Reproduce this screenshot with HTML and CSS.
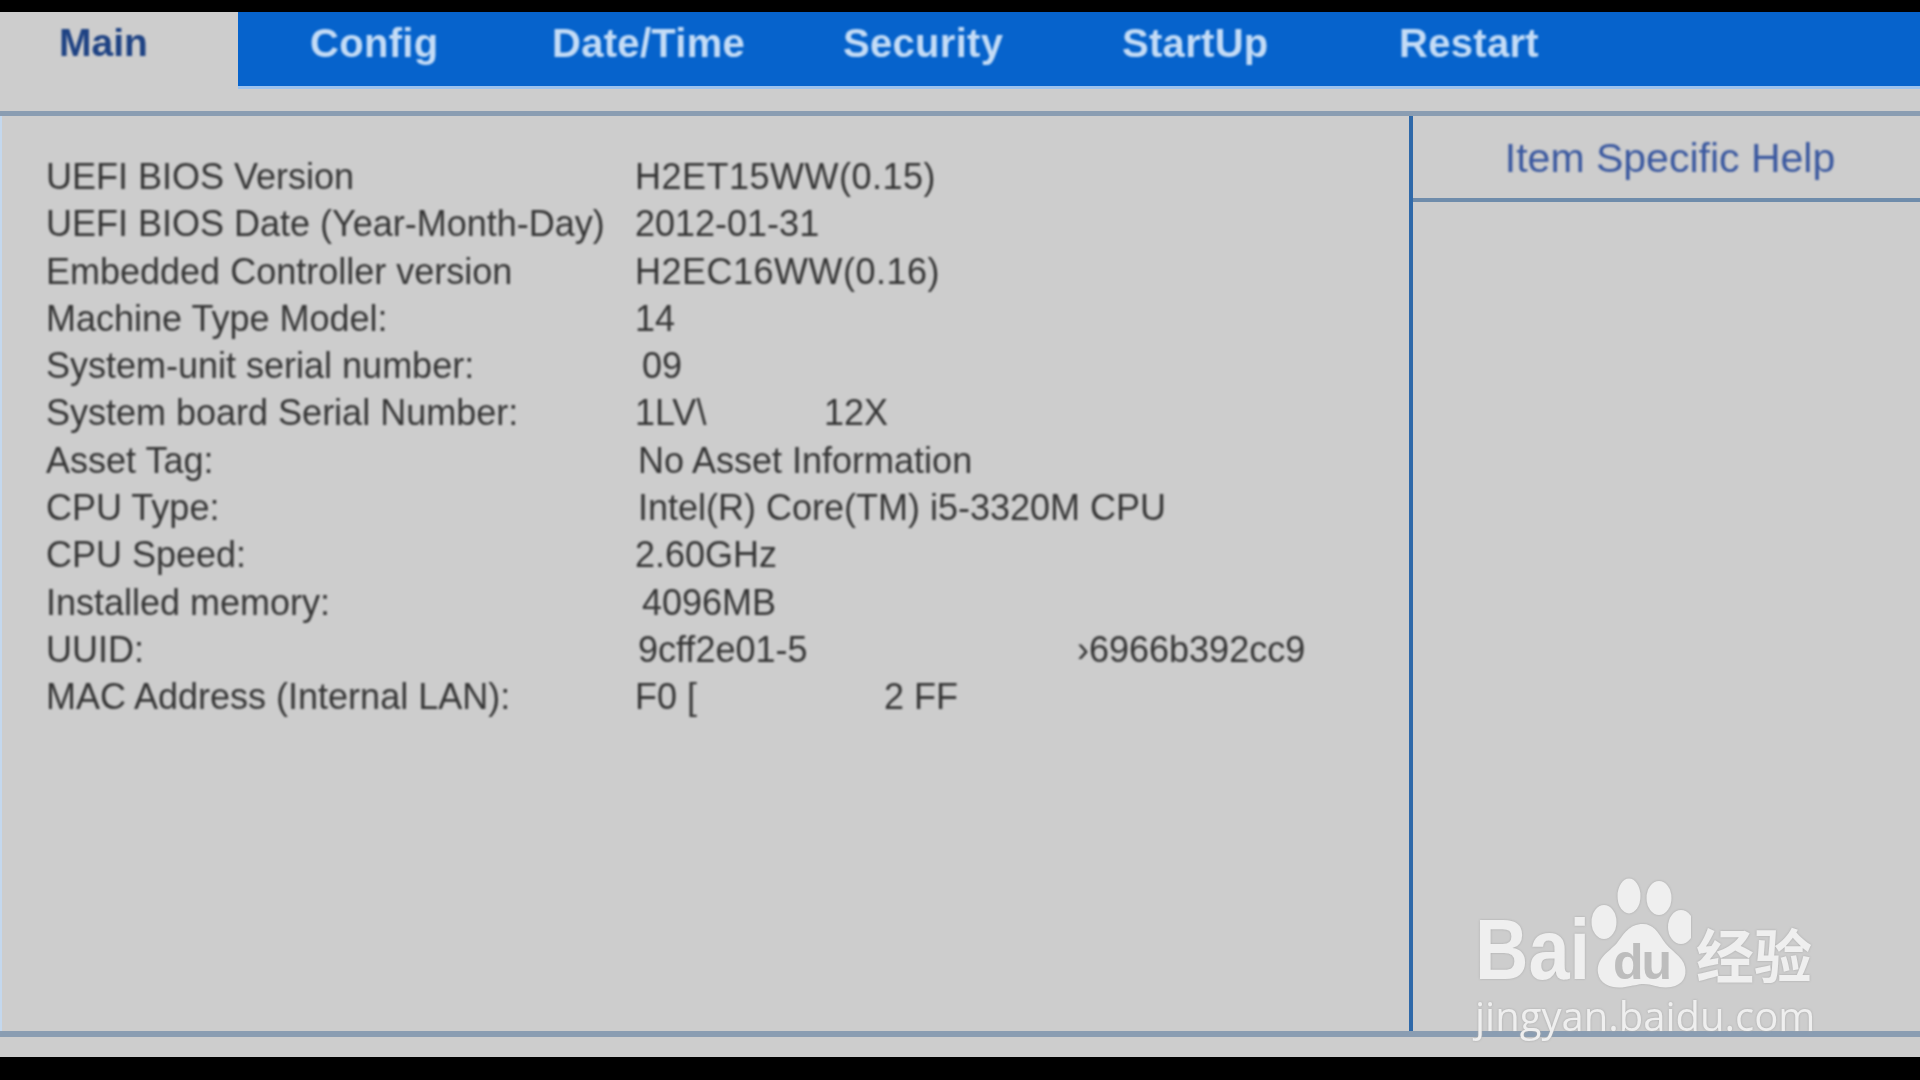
FILE: index.html
```html
<!DOCTYPE html>
<html lang="en">
<head>
<meta charset="utf-8">
<title>BIOS Main</title>
<link rel="stylesheet" href="styles.css">
</head>
<body>
<div class="screen">
  <div class="bios">
    <nav class="tabs">
      <div class="tab-main"><span class="blur">Main</span></div>
      <div class="tabbar blur-text">
        <span class="tab t1">Config</span>
        <span class="tab t2">Date/Time</span>
        <span class="tab t3">Security</span>
        <span class="tab t4">StartUp</span>
        <span class="tab t5">Restart</span>
      </div>
    </nav>
    <main class="panel">
      <section class="info">
        <div class="row"><span class="label">UEFI BIOS Version</span><span class="value wide">H2ET15WW(0.15)</span></div>
        <div class="row"><span class="label">UEFI BIOS Date (Year-Month-Day)</span><span class="value">2012-01-31</span></div>
        <div class="row"><span class="label">Embedded Controller version</span><span class="value wide">H2EC16WW(0.16)</span></div>
        <div class="row"><span class="label">Machine Type Model:</span><span class="value">14</span></div>
        <div class="row"><span class="label">System-unit serial number:</span><span class="value in2">09</span></div>
        <div class="row"><span class="label">System board Serial Number:</span><span class="value"><span class="g1">1LV\</span>12X</span></div>
        <div class="row"><span class="label">Asset Tag:</span><span class="value in1">No Asset Information</span></div>
        <div class="row"><span class="label">CPU Type:</span><span class="value in1">Intel(R) Core(TM) i5-3320M CPU</span></div>
        <div class="row"><span class="label">CPU Speed:</span><span class="value">2.60GHz</span></div>
        <div class="row"><span class="label">Installed memory:</span><span class="value in2">4096MB</span></div>
        <div class="row"><span class="label">UUID:</span><span class="value in1"><span class="g2">9cff2e01-5</span>&#x203A;6966b392cc9</span></div>
        <div class="row"><span class="label">MAC Address (Internal LAN):</span><span class="value"><span class="g3">F0 [</span>2 FF</span></div>
      </section>
      <aside class="help">
        <div class="help-head"><span class="help-title">Item Specific Help</span></div>
      </aside>
    </main>
  </div>
  <div class="watermark">
    <svg class="paw" viewBox="0 0 100 112" width="100" height="112" aria-hidden="true">
      <ellipse cx="13" cy="44" rx="12.500" ry="17"/>
      <ellipse cx="38" cy="18" rx="11.500" ry="17.500"/>
      <ellipse cx="68" cy="20" rx="12.500" ry="17"/>
      <ellipse cx="90" cy="49" rx="13" ry="17"/>
      <path d="M52 46C38 46 33 56 26 65C18 74 5 80 7 95C9 108 24 111 34 109C42 108 47 106 53 106C61 106 69 111 80 109C92 107 96 98 94 89C92 78 78 72 72 62C67 54 62 46 52 46Z"/>
    </svg>
    <span class="wm-bai">Bai</span>
    <span class="wm-du">du</span>
    <span class="wm-cn">经验</span>
    <span class="wm-url">jingyan.baidu.com</span>
  </div>
</div>
</body>
</html>
```

FILE: styles.css
```css
* { box-sizing: border-box; }
html, body { margin: 0; height: 100%; background: #000; }
body { font-family: "Liberation Sans", Arial, sans-serif; overflow: hidden; }

.screen {
  position: relative;
  width: 1920px;
  height: 1080px;
  padding: 12px 0 23px;
  background: #000;
}
.bios {
  height: 100%;
  display: flex;
  flex-direction: column;
  background: #cdcdcd;
  padding-bottom: 20px;
}

.tabs { display: flex; height: 77px; flex: none; }
.tab-main {
  width: 238px;
  padding: 9px 0 0 59px;
  font-size: 39px;
  line-height: 44px;
  font-weight: 700;
  color: #1e4283;
}
.blur, .blur-text .tab { filter: blur(0.9px); }
.blur { display: inline-block; }
.tabbar {
  flex: 1;
  display: flex;
  padding-top: 9px;
  background: #0663cc;
  border-bottom: 3px solid #9cc2ee;
  font-size: 40px;
  line-height: 44px;
  font-weight: 700;
  letter-spacing: 0.3px;
  color: #c4dcf6;
}
.tab { display: block; flex: none; }
.t1 { margin-left: 72px; width: 242px; }
.t2 { width: 291px; }
.t3 { width: 279px; }
.t4 { width: 277px; }

.panel {
  flex: 1;
  min-height: 0;
  margin-top: 22px;
  display: flex;
  border-top: 5px solid #8a9db2;
  border-bottom: 6px solid #8a9db2;
}
.info {
  width: 1409px;
  flex: none;
  padding-top: 37px;
  border-left: 2px solid #c4d8ee;
  font-size: 36px;
  color: #363636;
}
.row {
  display: flex;
  height: 47.3px;
  line-height: 47.3px;
  filter: blur(0.9px);
}
.label { width: 633px; flex: none; padding-left: 44px; white-space: nowrap; }
.value { display: block; white-space: nowrap; }
.wide { letter-spacing: 0.5px; }
.in1 { padding-left: 3px; }
.in2 { padding-left: 7px; }
.g1 { display: inline-block; width: 189px; }
.g2 { display: inline-block; width: 439px; }
.g3 { display: inline-block; width: 249px; }

.help {
  flex: 1;
  border-left: 4px solid #2f69a9;
}
.help-head {
  height: 86px;
  padding-top: 2px;
  display: flex;
  justify-content: center;
  align-items: center;
  border-bottom: 4px solid #6f8cab;
}
.help-title {
  margin-right: -7px;
  font-size: 41px;
  color: #3a589f;
  filter: blur(0.8px);
}

/* Baidu watermark floats over the page */
.watermark {
  position: absolute;
  left: 1470px;
  top: 870px;
  width: 360px;
  height: 190px;
  color: #efefef;
  filter: drop-shadow(0 0 1px #a9a9a9);
}
.paw { position: absolute; left: 121px; top: 8px; fill: #efefef; }
.wm-bai {
  position: absolute;
  left: 5px;
  top: 34px;
  font-size: 86px;
  line-height: 90px;
  font-weight: 700;
  transform: scaleX(0.86);
  transform-origin: left center;
}
.wm-du {
  position: absolute;
  left: 143px;
  top: 64px;
  font-size: 50px;
  line-height: 56px;
  letter-spacing: -2px;
  font-weight: 700;
  color: #bdbdbd;
}
.wm-cn {
  position: absolute;
  left: 226px;
  top: 47px;
  font-family: "Noto Sans CJK SC", sans-serif;
  font-size: 58px;
  line-height: 72px;
  font-weight: 700;
}
.wm-url {
  position: absolute;
  left: 5px;
  top: 122px;
  font-family: "Open Sans", sans-serif;
  font-size: 40px;
  line-height: 48px;
  white-space: nowrap;
}
```
